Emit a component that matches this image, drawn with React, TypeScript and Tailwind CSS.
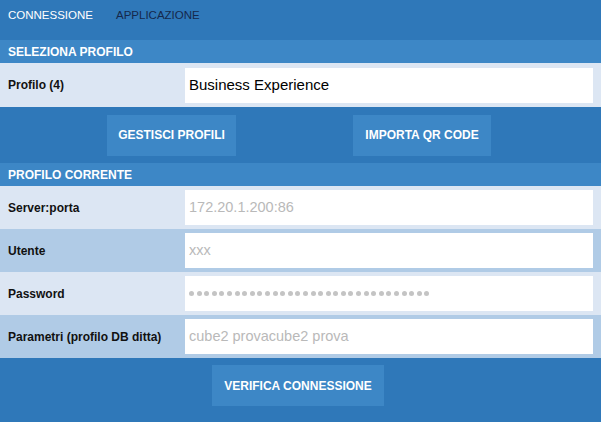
import React from 'react'

type Field = {
  label: string
  value: string
  dark?: boolean
  password?: boolean
}

const fields: Field[] = [
  { label: 'Server:porta', value: '172.20.1.200:86' },
  { label: 'Utente', value: 'xxx', dark: true },
  { label: 'Password', value: '', password: true },
  { label: 'Parametri (profilo DB ditta)', value: 'cube2 provacube2 prova', dark: true },
]

function SectionHeader({ title }: { title: string }) {
  return (
    <div className="h-[23px] bg-[#3d87c6] pl-[8px] flex items-center text-[12px] font-bold text-white">
      {title}
    </div>
  )
}

function Row({ label, dark, children }: { label: string; dark?: boolean; children: React.ReactNode }) {
  return (
    <div className={`h-[43px] flex items-center ${dark ? 'bg-[#b0cbe6]' : 'bg-[#dce6f3]'}`}>
      <div className="w-[185px] shrink-0 pl-[8px] text-[12px] font-bold text-[#111]">{label}</div>
      <div className="flex-1 mr-[8px] h-[35px] bg-white flex items-center pl-[4px]">{children}</div>
    </div>
  )
}

function BlueButton({ label, width }: { label: string; width: string }) {
  return (
    <button className={`${width} h-[41px] bg-[#3d87c6] text-white text-[12px] font-bold flex items-center justify-center`}>
      {label}
    </button>
  )
}

export default function App() {
  return (
    <div className="w-[601px] h-[422px] bg-[#2f78b9] flex flex-col" style={{ fontFamily: '"Liberation Sans", Arial, sans-serif' }}>
      {/* tabs */}
      <div className="h-[40px] flex items-start pt-[7px] pl-[8px] gap-[23px] text-[11.5px]">
        <span className="text-white">CONNESSIONE</span>
        <span className="text-[#15284c]">APPLICAZIONE</span>
      </div>

      <SectionHeader title="SELEZIONA PROFILO" />
      <div className="h-[44px] bg-[#dce6f3] flex items-center">
        <div className="w-[185px] shrink-0 pl-[8px] text-[12px] font-bold text-[#111]">Profilo (4)</div>
        <div className="flex-1 mr-[8px] h-[35px] bg-white flex items-center pl-[4px] text-[15px] text-black">
          Business Experience
        </div>
      </div>

      <div className="h-[56px] flex items-center justify-center gap-[117px] pr-[3px]">
        <BlueButton label="GESTISCI PROFILI" width="w-[129px]" />
        <BlueButton label="IMPORTA QR CODE" width="w-[138px]" />
      </div>

      <SectionHeader title="PROFILO CORRENTE" />
      {fields.map((f) => (
        <Row key={f.label} label={f.label} dark={f.dark}>
          {f.password ? (
            <div className="flex gap-[2.6px]">
              {Array.from({ length: 32 }).map((_, i) => (
                <span key={i} className="w-[5px] h-[5px] rounded-full bg-[#c4c4c4]" />
              ))}
            </div>
          ) : (
            <span className="text-[14.5px] text-[#b9b9b9]">{f.value}</span>
          )}
        </Row>
      ))}

      <div className="flex-1 flex items-start justify-center pt-[7px] pr-[5px]">
        <BlueButton label="VERIFICA CONNESSIONE" width="w-[172px]" />
      </div>
    </div>
  )
}
